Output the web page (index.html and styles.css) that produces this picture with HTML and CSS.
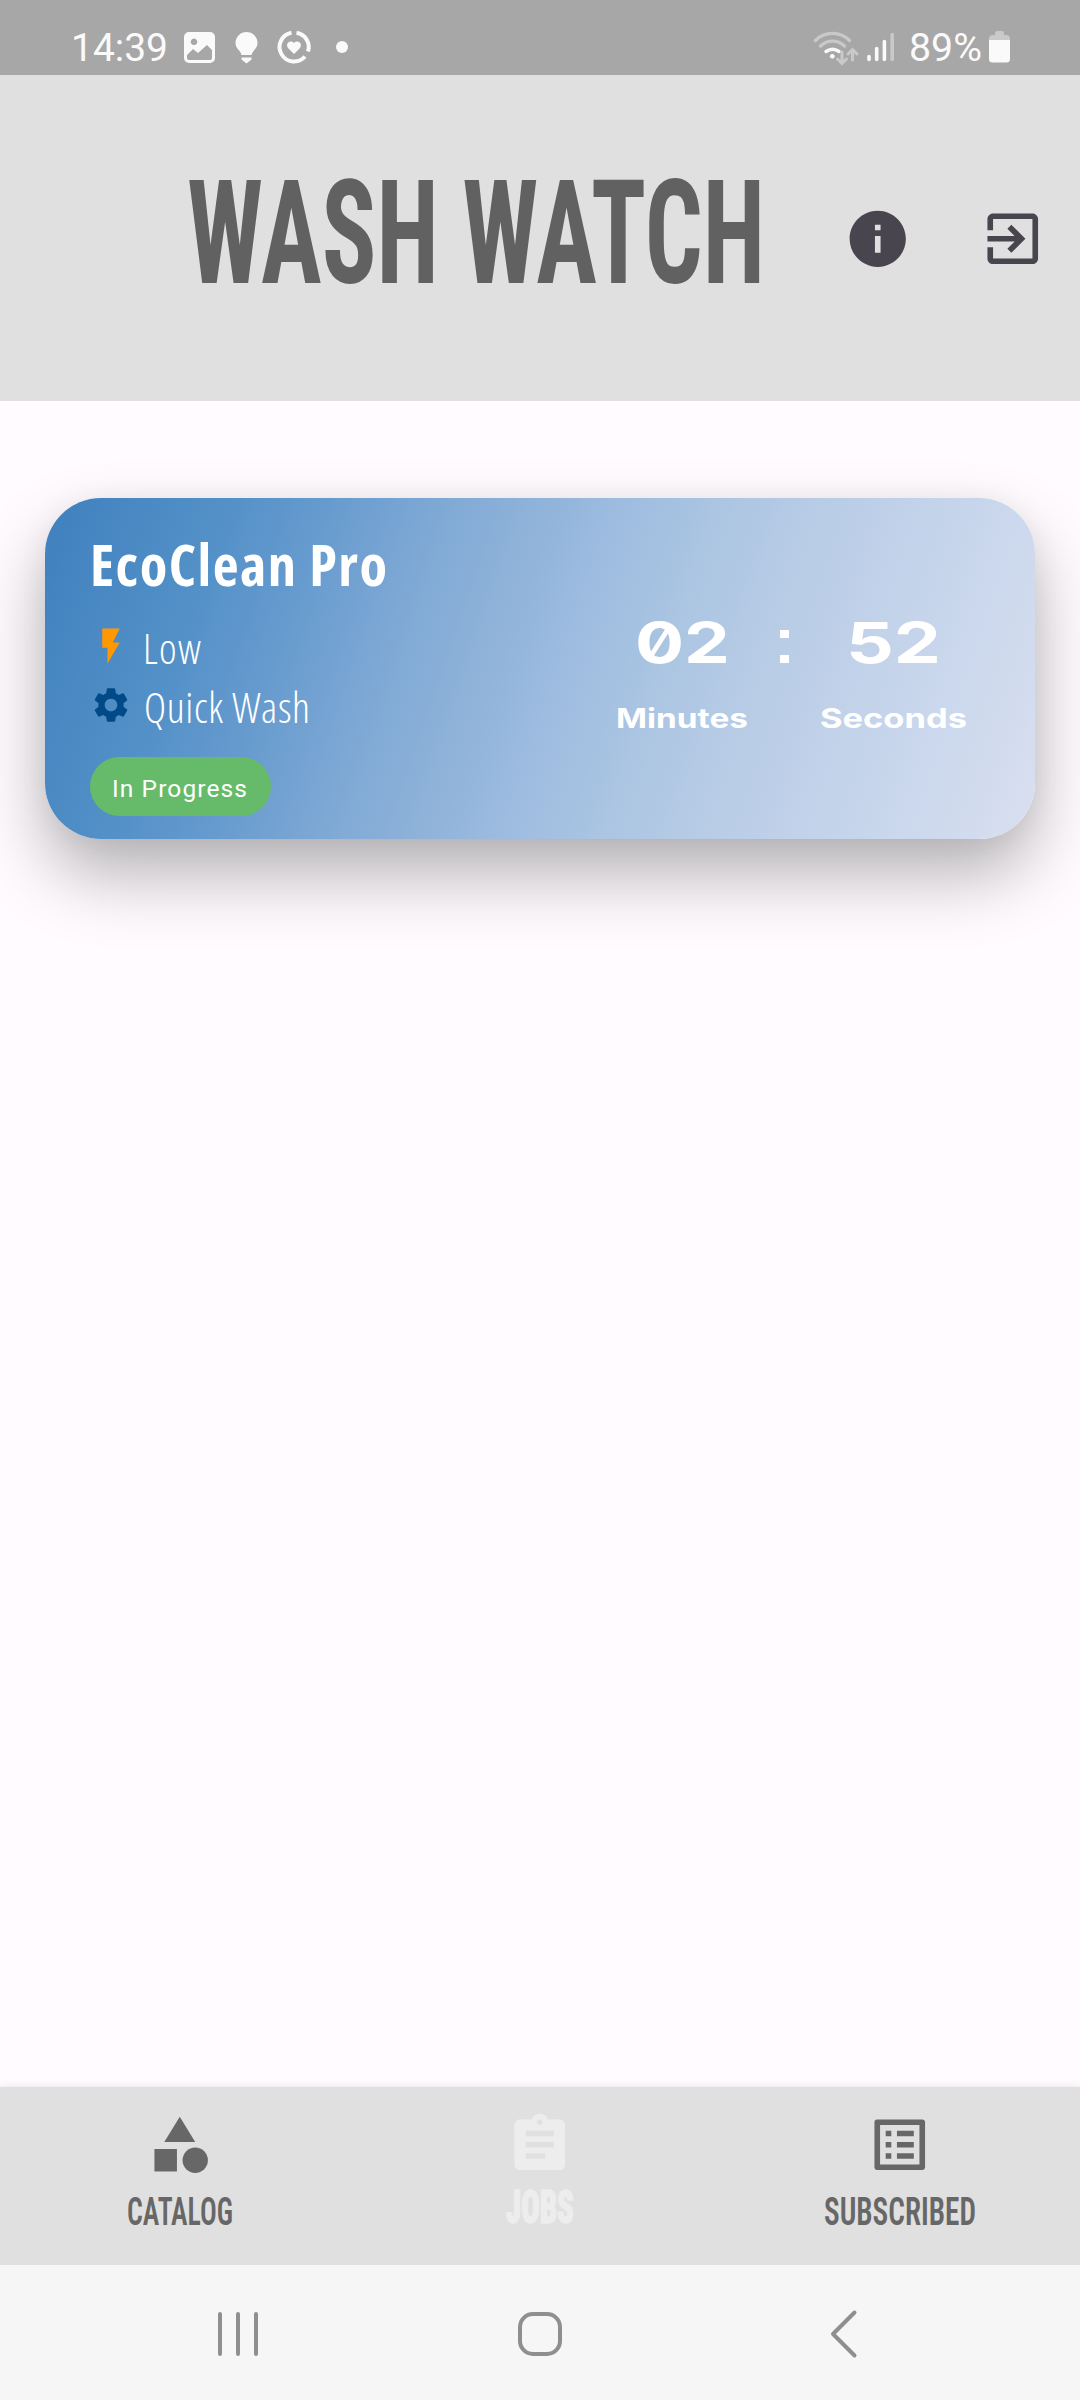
FILE: index.html
```html
<!DOCTYPE html>
<html lang="en">
<head>
<meta charset="utf-8">
<title>Wash Watch</title>
<link rel="stylesheet" href="styles.css">
</head>
<body>
<div class="screen">
  <div class="status">
    <div class="status-left">
      <svg class="clock" width="94" height="40"><text x="-2" y="32" textLength="97" lengthAdjust="spacingAndGlyphs">14:39</text></svg>
      <svg class="s-image" width="31" height="31" viewBox="0 0 31 31"><path fill-rule="evenodd" fill="#fafafa" d="M5 0h21a5 5 0 0 1 5 5v21a5 5 0 0 1-5 5H5a5 5 0 0 1-5-5V5a5 5 0 0 1 5-5zM10 6.500a3.300 3.300 0 1 0 .01 0zM3 23v3q0 2 2 2h21q2 0 2-2v-8l-5-5-9 8-5-4z"/></svg>
      <svg class="s-bulb" width="23" height="32" viewBox="0 0 23 32"><path fill="#fafafa" d="M11.500 0a11 11 0 0 1 11 11c0 6-5 7-6 12h-10c-1-5-6-6-6-12a11 11 0 0 1 11-11zM6.500 25.500h10v2l-2.500 2-2.500 2-2.500-2-2.500-2z"/></svg>
      <svg class="s-heart" width="34" height="34" viewBox="0 0 34 34"><g fill="none" stroke="#fafafa" stroke-width="4"><path d="M14.500 2.700A14.500 14.500 0 1 0 28 26.500"/><path d="M19.500 2.700A14.500 14.500 0 0 1 31 21.500"/></g><path fill="#fafafa" d="M17 24l-6-6c-3-4 2-9 6-5 4-4 9 1 6 5z"/></svg>
      <i class="dot"></i>
    </div>
    <div class="status-right">
      <svg width="46" height="36" viewBox="0 0 46 36"><g fill="none" stroke-width="3.400" stroke-linecap="round"><path stroke="#c9c9c9" d="M2.500 10.500c9-9.500 25-9.500 34 0M7.500 16c7-6.500 17-6.500 24 0"/><path stroke="#fafafa" d="M13 21.500q6.500-4.500 13 0"/><path stroke="#c9c9c9" stroke-width="3" d="M29 22v11M24.500 29l4.500 4.500 4.500-4.500M39.500 30V20M35 24l4.500-4.500L44 24"/></g><circle cx="19.300" cy="26.300" r="2.400" fill="#fafafa"/></svg>
      <svg class="s-cell" width="28" height="30" viewBox="0 0 28 30"><g stroke-width="3.600" stroke-linecap="round"><path stroke="#fafafa" d="M2 24.500v3M9.700 16.500v11M17.400 9.500v18"/><path stroke="#c9c9c9" d="M25.200 2.500v25"/></g></svg>
      <svg class="percent" width="70" height="40"><text x="-2" y="32" textLength="73" lengthAdjust="spacingAndGlyphs">89%</text></svg>
      <svg class="s-batt" width="21" height="32" viewBox="0 0 21 32"><path fill="#c9c9c9" d="M6 2q0-2 2-2h5q2 0 2 2v2h2q4 0 4 4v3H0V8q0-4 4-4h2z"/><path fill="#fafafa" d="M0 9h21v19q0 3.500-3.500 3.500h-14Q0 31.500 0 28z"/></svg>
    </div>
  </div>

  <header class="header">
    <svg class="title" width="570" height="103"><text x="-2" y="102.500" textLength="578" lengthAdjust="spacingAndGlyphs">WASH WATCH</text></svg>
    <svg class="info" width="67.500" height="67.500" viewBox="0 0 24 24"><path d="M12 2C6.480 2 2 6.480 2 12s4.480 10 10 10 10-4.480 10-10S17.520 2 12 2zm1 15h-2v-6h2v6zm0-8h-2V7h2v2z"/></svg>
    <svg width="67.500" height="67.500" viewBox="0 0 24 24"><path d="M10.090 15.590L11.500 17l5-5-5-5-1.410 1.410L12.670 11H3v2h9.670l-2.580 2.590zM19 3H5c-1.110 0-2 .9-2 2v4h2V5h14v14H5v-4H3v4c0 1.100.89 2 2 2h14c1.100 0 2-.9 2-2V5c0-1.100-.9-2-2-2z"/></svg>
  </header>

  <main class="content">
    <section class="card">
      <div class="job">
        <svg class="name" width="293" height="44"><text x="-4" y="42" textLength="297" lengthAdjust="spacing">EcoClean Pro</text></svg>
        <div class="row low">
          <svg width="42" height="42" viewBox="0 0 24 24"><path fill="#ff9800" d="M7 2v11h3v9l7-12h-4l4-8z"/></svg>
          <svg class="detail" width="56" height="42"><text x="-3" y="39" textLength="58" lengthAdjust="spacing">Low</text></svg>
        </div>
        <div class="row">
          <svg width="42" height="42" viewBox="0 0 24 24"><path fill="#014a88" d="M19.140 12.940c.04-.3.060-.61.060-.94 0-.32-.02-.64-.07-.94l2.030-1.580c.18-.14.230-.41.120-.61l-1.920-3.320c-.12-.22-.37-.29-.59-.22l-2.390.96c-.5-.38-1.030-.7-1.620-.94l-.36-2.540c-.04-.24-.24-.41-.48-.41h-3.840c-.24 0-.43.170-.47.410l-.36 2.540c-.59.240-1.130.57-1.620.94l-2.390-.96c-.22-.08-.47 0-.59.220L2.740 8.870c-.12.210-.08.470.12.610l2.030 1.580c-.05.3-.09.630-.09.940s.02.640.07.940l-2.030 1.580c-.18.140-.23.410-.12.610l1.920 3.320c.12.220.37.290.59.220l2.390-.96c.5.380 1.030.7 1.620.94l.36 2.540c.05.240.24.410.48.410h3.840c.24 0 .44-.17.470-.41l.36-2.540c.59-.24 1.130-.56 1.620-.94l2.390.96c.22.080.47 0 .59-.22l1.920-3.320c.12-.22.070-.47-.12-.61l-2.010-1.580zM12 15.600c-1.980 0-3.600-1.620-3.600-3.600s1.620-3.600 3.600-3.600 3.600 1.620 3.600 3.600-1.620 3.600-3.600 3.600z"/></svg>
          <svg class="detail" width="164" height="42"><text x="-2" y="39" textLength="166" lengthAdjust="spacing">Quick Wash</text></svg>
        </div>
        <div class="badge"><svg width="133" height="30"><text x="-2" y="24" textLength="135" lengthAdjust="spacing">In Progress</text></svg></div>
      </div>
      <div class="timer">
        <div class="unit minutes">
          <svg class="digits" width="89" height="41"><text x="-3" y="41" textLength="95" lengthAdjust="spacingAndGlyphs">02</text></svg>
          <svg class="label" width="129" height="20"><text x="-2" y="20" textLength="132" lengthAdjust="spacingAndGlyphs">Minutes</text></svg>
        </div>
        <div class="colon"><i></i><i></i></div>
        <div class="unit">
          <svg class="digits" width="89" height="41"><text x="-3" y="41" textLength="95" lengthAdjust="spacingAndGlyphs">52</text></svg>
          <svg class="label" width="145" height="20"><text x="-1" y="20" textLength="147" lengthAdjust="spacingAndGlyphs">Seconds</text></svg>
        </div>
      </div>
    </section>
  </main>

  <nav class="tabs">
    <div class="tab">
      <svg width="67.500" height="67.500" viewBox="0 0 24 24"><path d="M12 2l-5.500 9h11z"/><circle cx="17.500" cy="17.500" r="4.500"/><path d="M3 13.500h8v8H3z"/></svg>
      <svg class="tab-label" width="104" height="28"><text x="-1" y="28" textLength="106" lengthAdjust="spacingAndGlyphs">CATALOG</text></svg>
    </div>
    <div class="tab active">
      <svg width="67.500" height="67.500" viewBox="0 0 24 24"><path d="M19 3h-4.180C14.400 1.840 13.300 1 12 1c-1.300 0-2.400.84-2.820 2H5c-1.100 0-2 .9-2 2v14c0 1.100.9 2 2 2h14c1.100 0 2-.9 2-2V5c0-1.100-.9-2-2-2zm-7 0c.55 0 1 .45 1 1s-.45 1-1 1-1-.45-1-1 .45-1 1-1zm2 14H7v-2h7v2zm3-4H7v-2h10v2zm0-4H7V7h10v2z"/></svg>
      <svg class="tab-label" width="67" height="34"><text x="-1" y="33" textLength="68" lengthAdjust="spacingAndGlyphs">JOBS</text></svg>
    </div>
    <div class="tab">
      <svg width="67.500" height="67.500" viewBox="0 0 24 24"><path d="M19 5v14H5V5h14m1.100-2H3.900c-.5 0-.9.400-.9.900v16.200c0 .4.400.9.900.9h16.200c.4 0 .9-.5.900-.9V3.900c0-.5-.5-.9-.9-.9zM11 7h6v2h-6V7zm0 4h6v2h-6v-2zm0 4h6v2h-6zM7 7h2v2H7zm0 4h2v2H7zm0 4h2v2H7z"/></svg>
      <svg class="tab-label" width="150" height="28"><text x="-1" y="28" textLength="152" lengthAdjust="spacingAndGlyphs">SUBSCRIBED</text></svg>
    </div>
  </nav>

  <div class="system">
    <svg width="40" height="46" viewBox="0 0 40 46"><path d="M2 3v40M20 3v40M38 3v40"/></svg>
    <svg width="46" height="46" viewBox="0 0 46 46"><rect x="3" y="3" width="40" height="40" rx="13"/></svg>
    <svg width="28" height="48" viewBox="0 0 28 48"><path d="M25.500 2.500L4 24l21.500 21.500"/></svg>
  </div>
</div>
</body>
</html>
```
FILE: styles.css
```css
* { box-sizing: border-box; }
body { margin: 0; background: #fffbff; font-family: Roboto, sans-serif; }
svg { display: block; overflow: visible; flex: none; }
.screen { width: 1080px; height: 2400px; display: flex; flex-direction: column; }

.status { height: 75px; background: #a7a7a7; display: flex; justify-content: space-between; padding: 0 70px 0 73px; flex: none; }
.status-left, .status-right { display: flex; align-items: flex-start; }
.clock, .percent { font-size: 39.500px; fill: #fafafa; margin-top: 29px; }
.s-image { margin: 32px 0 0 17px; }
.s-bulb { margin: 32px 0 0 20px; }
.s-heart { margin: 30px 0 0 19px; }
.dot { width: 12px; height: 12px; border-radius: 50%; background: #fafafa; margin: 41px 0 0 25px; }
.status-right svg { margin-top: 30px; }
.status-right .s-cell { margin: 32px 0 0 8px; }
.status-right .percent { margin: 29px 0 0 16px; }
.status-right .s-batt { margin: 31px 0 0 8px; }

.header { height: 326px; background: #e0e0e0; display: flex; padding: 105px 33px 0 189px; flex: none; fill: #49454f; }
.header > svg { margin-top: 24.500px; }
.header .title { margin-top: 0; font: 700 144px Roboto, sans-serif; font-stretch: 75%; fill: #616161; }
.header .info { margin-left: 85px; margin-right: 67px; }

.content { flex: 1; padding: 97px 45px 0; }
.card { height: 341px; border-radius: 56px; display: flex; justify-content: space-between; padding: 46px 69px 0 45px;
  background: linear-gradient(109deg, #3f80be 0%, #5491c8 17%, #659ace 25%, #7fa9d5 36%, #92b4da 46%, #9dbce0 52%, #abc5e2 61%, #b8cce6 70%, #c8d6ec 85%, #d9dff0 100%);
  box-shadow: 0 36px 70px rgba(0,0,0,.29), 0 2px 30px rgba(0,0,0,.05); }
.name { margin-left: 4px; font: 700 56.500px "Open Sans", sans-serif; font-stretch: 75%; fill: #fff; }
.row { display: flex; height: 42px; gap: 14px; margin-bottom: 31px; }
.row.low { margin: 36.500px 0 17.500px; }
.detail { font: 300 42px "Open Sans", sans-serif; font-stretch: 75%; fill: #fff; }
.badge { width: 181px; height: 59px; border-radius: 30px; background: #66bb6a; padding: 15.500px 24px; font-size: 24.500px; fill: #fff; }
.timer { display: flex; padding-top: 78px; }
.unit { display: flex; flex-direction: column; align-items: center; gap: 45px; fill: #fff; }
.digits { font: 700 56.500px Inter, sans-serif; font-feature-settings: "zero"; }
.label { font: 700 27.500px Inter, sans-serif; }
.colon { width: 9px; margin: 8px 32px 0 33px; display: flex; flex-direction: column; gap: 17px; }
.colon i { width: 9px; height: 8px; background: #fff; }

.tabs { height: 178px; background: #e0e0e0; display: flex; flex: none; box-shadow: 0 -1px 8px rgba(0,0,0,.08); }
.tab { flex: 1; display: flex; flex-direction: column; align-items: center; padding-top: 24px; fill: #676767; }
.tab-label { margin-top: 18px; font: 600 39px Roboto, sans-serif; font-stretch: 75%; }
.active { fill: #ededed; }
.active .tab-label { margin-top: 11.500px; font-size: 46px; font-weight: 900; stroke: #ededed; stroke-width: 1.500px; }

.system { height: 135px; background: #f6f6f6; display: flex; align-items: center; justify-content: space-between; padding: 2px 223px 0 218px; flex: none; fill: none; stroke: #8f8f8f; stroke-width: 4; stroke-linecap: round; stroke-linejoin: round; }
.system svg:nth-child(2) { margin-right: 7px; }
```
